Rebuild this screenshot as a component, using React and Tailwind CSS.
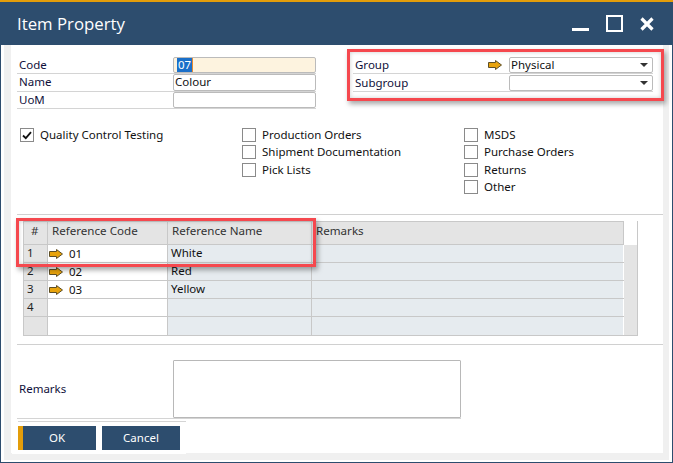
const NAVY = 'bg-[#2d4d6e]';

function Arrow() {
  return (
    <svg width="14" height="10" viewBox="0 0 14 10" className="shrink-0">
      <path d="M0.5 2.5H7.5V0.5L13.5 5L7.5 9.5V7.5H0.5Z" fill="#e8a30c" stroke="#5e4f26" strokeWidth="1" />
    </svg>
  );
}

function Check({ label, checked, mt }) {
  return (
    <div className={`flex items-center h-[14px] gap-[6px] ${mt || ''}`}>
      <div className="w-[14px] h-[14px] border border-[#8a8a8a] bg-white flex items-center justify-center shrink-0">
        {checked && (
          <svg width="10" height="9" viewBox="0 0 10 9">
            <path d="M1 4.5L3.8 7.2L9 1.2" fill="none" stroke="#111" strokeWidth="1.8" />
          </svg>
        )}
      </div>
      <span className="whitespace-nowrap">{label}</span>
    </div>
  );
}

function FieldRow({ label, value, h, active }) {
  return (
    <div className={`flex w-[299px] ${h} border-b border-[#d4d4d4]`}>
      <div className="w-[156px] pl-[2px] leading-[16px] text-[#10103a]">{label}</div>
      <div className={`flex-1 border border-[#bbbbbb] rounded-[2px] pl-[1px] leading-[14px] ${active ? 'bg-[#fdf3df]' : 'bg-white'}`}>
        {active ? <span className="inline-block ml-[2px] bg-[#1a6fc9] text-white px-[1px] border-r border-[#e88a30]">{value}</span> : value}
      </div>
    </div>
  );
}

function SelectRow({ label, value, arrow, mt }) {
  return (
    <div className={`flex w-[300px] h-[17px] border-b border-[#d4d4d4] ${mt || ''}`}>
      <div className="w-[156px] pl-[2px] pr-[7px] leading-[16px] flex items-center justify-between text-[#10103a]">
        <span>{label}</span>
        {arrow && <Arrow />}
      </div>
      <div className="flex-1 border border-[#bbbbbb] rounded-[2px] pl-[1px] pr-[4px] leading-[14px] flex items-center justify-between">
        <span>{value}</span>
        <span className="w-0 h-0 border-x-[4px] border-x-transparent border-t-[4px] border-t-[#333]" />
      </div>
    </div>
  );
}

const rows = [
  { n: '1', code: '01', name: 'White' },
  { n: '2', code: '02', name: 'Red' },
  { n: '3', code: '03', name: 'Yellow' },
  { n: '4' },
  { n: '' },
];

function Grid() {
  return (
    <div className="ml-[6px] w-[615px] flex border-r border-b border-[#c8c8c8]">
      <div className="w-[601px] border-l border-t border-[#c8c8c8]">
        <div className="flex h-[23px] bg-[#e4e4e4] border-b border-[#c8c8c8] text-[11.6px] leading-[18px] text-[#333]">
          <div className="w-[24px] pl-[7px] border-r border-[#c8c8c8] bg-[#e4e4e4]">#</div>
          <div className="w-[120px] pl-[4px] border-r border-[#c8c8c8]">Reference Code</div>
          <div className="w-[144px] pl-[4px] border-r border-[#c8c8c8]">Reference Name</div>
          <div className="flex-1 pl-[4px] border-r border-[#c8c8c8]">Remarks</div>
        </div>
        {rows.map((r, i) => (
          <div key={i} className={`flex h-[18px] leading-[16px] ${i < 4 ? 'border-b' : ''} border-[#c8c8c8]`}>
            <div className="w-[24px] pl-[3px] bg-[#e4e4e4] border-r border-[#c8c8c8] text-[#222]">{r.n}</div>
            <div className="w-[120px] pl-[1px] border-r border-[#c8c8c8] bg-white flex items-center gap-[6px]">
              {r.code && <Arrow />}
              <span>{r.code}</span>
            </div>
            <div className="w-[144px] pl-[3px] border-r border-[#c8c8c8] bg-[#e6ebef]">{r.name}</div>
            <div className="flex-1 bg-[#e6ebef] border-r border-white" />
          </div>
        ))}
      </div>
      <div className="flex-1 flex flex-col border-t border-transparent">
        <div className="h-[23px] bg-white" />
        <div className="flex-1 bg-[#e4e4e4]" />
      </div>
    </div>
  );
}

export default function App() {
  return (
    <div className="w-[673px] h-[463px] flex flex-col relative overflow-hidden bg-white text-[11.5px] text-[#111] font-['Noto_Sans',sans-serif]">
      <div className="h-[2px] bg-[#e39d0a]" />
      <div className={`h-[43px] ${NAVY} flex items-center justify-between pl-[17px] pr-[19px] text-white`}>
        <span className="text-[16.8px] leading-none pt-[2px] font-['Open_Sans',sans-serif]">Item Property</span>
        <div className="flex items-center gap-[17px]">
          <svg width="17" height="17" viewBox="0 0 17 17"><path d="M0 14.5H17" stroke="#fff" strokeWidth="3" /></svg>
          <svg width="17" height="17" viewBox="0 0 17 17"><rect x="1" y="1" width="15" height="15" fill="none" stroke="#fff" strokeWidth="2" /></svg>
          <svg width="14" height="14" viewBox="0 0 14 14"><path d="M1.5 1.5L12.5 12.5M12.5 1.5L1.5 12.5" stroke="#fff" strokeWidth="3.2" /></svg>
        </div>
      </div>

      {/* window frame */}
      <div className="flex-1 min-h-0 flex flex-col border-x border-b border-[#2d4d6e] pl-[3px] pr-[3px] pb-[2px]">
        <div className="flex-1 min-h-0 flex flex-col bg-[#f0f0f0] pl-[7px] pr-[6px] pb-[7px]">
          <div className="flex-1 min-h-0 bg-white flex flex-col pl-[6px]">
            {/* header fields */}
            <div className="flex pt-[12px] h-[67px]">
              <div className="flex flex-col">
                <FieldRow label="Code" value="07" h="h-[17px]" active />
                <FieldRow label="Name" value="Colour" h="h-[18px]" />
                <FieldRow label="UoM" value="" h="h-[17px]" />
              </div>
              <div className="ml-[37px] flex flex-col">
                <SelectRow label="Group" value="Physical" arrow />
                <SelectRow label="Subgroup" value="" mt="mt-px" />
              </div>
            </div>

            {/* checkboxes */}
            <div className="flex pt-[16px] pl-[3px] h-[102px]">
              <div className="w-[222px]">
                <Check label="Quality Control Testing" checked />
              </div>
              <div className="w-[222px] flex flex-col">
                <Check label="Production Orders" />
                <Check label="Shipment Documentation" mt="mt-[3px]" />
                <Check label="Pick Lists" mt="mt-[4px]" />
              </div>
              <div className="flex flex-col">
                <Check label="MSDS" />
                <Check label="Purchase Orders" mt="mt-[3px]" />
                <Check label="Returns" mt="mt-[4px]" />
                <Check label="Other" mt="mt-[3px]" />
              </div>
            </div>

            {/* table */}
            <div className="border-y border-[#d0d0d0] h-[131px] pt-[6px]">
              <Grid />
            </div>

            {/* remarks */}
            <div className="flex items-stretch h-[59px] mt-[15px] w-[444px] border-b border-[#d4d4d4]">
              <div className="w-[156px] pl-[2px] flex items-center text-[#10103a]">Remarks</div>
              <div className="flex-1 border border-[#b8b8b8] rounded-[1px]" />
            </div>
          </div>
        </div>
      </div>

      {/* button bar sits over the frame edge */}
      <div className="absolute left-[12px] top-[420px] w-[174px] h-[34px] bg-white pl-[6px]">
        <div className="border-t border-[#d4d4d4] pt-[4px] mt-px flex gap-[6px]">
          <button className={`w-[78px] h-[24px] ${NAVY} border-l-[5px] border-[#e39d0a] text-white text-center pr-[5px]`}>OK</button>
          <button className={`w-[78px] h-[24px] ${NAVY} text-white text-center`}>Cancel</button>
        </div>
      </div>

      {/* red annotation boxes */}
      <div className="absolute left-[347px] top-[49px] w-[317px] h-[52px] border-[3px] border-[#f5484e] shadow-[2px_3px_5px_rgba(0,0,0,0.35),inset_0_0_4px_rgba(0,0,0,0.2)]" />
      <div className="absolute left-[16px] top-[218px] w-[300px] h-[49px] border-[3px] border-[#f5484e] shadow-[2px_3px_5px_rgba(0,0,0,0.35),inset_0_0_4px_rgba(0,0,0,0.2)]" />
    </div>
  );
}
